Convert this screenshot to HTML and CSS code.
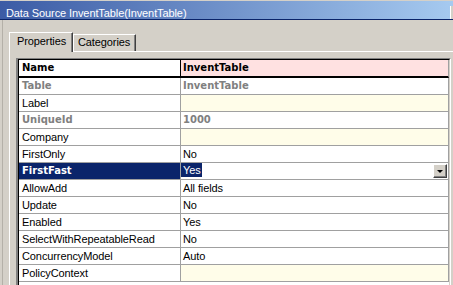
FILE: index.html
```html
<!DOCTYPE html>
<html>
<head>
<meta charset="utf-8">
<title>Data Source InventTable(InventTable)</title>
<link rel="stylesheet" href="styles.css">
</head>
<body>
<div class="window">
  <div class="titlebar">
    <span class="title">Data Source InventTable(InventTable)</span>
    <span class="ctrl"></span>
  </div>
  <div class="client">
    <div class="tabs">
      <div class="tab active">Properties</div>
      <div class="tab">Categories</div>
    </div>
    <div class="panel">
      <div class="grid-frame">
        <div class="grid">
          <div class="row head"><div class="k b">Name</div><div class="v b pink">InventTable</div></div>
          <div class="row"><div class="k b dim">Table</div><div class="v b dim">InventTable</div></div>
          <div class="row"><div class="k">Label</div><div class="v yellow"></div></div>
          <div class="row"><div class="k b dim">UniqueId</div><div class="v b dim">1000</div></div>
          <div class="row"><div class="k">Company</div><div class="v yellow"></div></div>
          <div class="row"><div class="k">FirstOnly</div><div class="v">No</div></div>
          <div class="row sel"><div class="k b">FirstFast</div><div class="v edit"><span class="hl">Yes</span><span class="dd"><span class="arrow"></span></span></div></div>
          <div class="row"><div class="k">AllowAdd</div><div class="v">All fields</div></div>
          <div class="row"><div class="k">Update</div><div class="v">No</div></div>
          <div class="row"><div class="k">Enabled</div><div class="v">Yes</div></div>
          <div class="row"><div class="k">SelectWithRepeatableRead</div><div class="v">No</div></div>
          <div class="row"><div class="k">ConcurrencyModel</div><div class="v">Auto</div></div>
          <div class="row"><div class="k">PolicyContext</div><div class="v yellow"></div></div>
        </div>
      </div>
    </div>
  </div>
</div>
</body>
</html>
```
FILE: styles.css
```css
html, body {
  margin: 0;
  padding: 0;
}
body {
  width: 453px;
  height: 285px;
  overflow: hidden;
  background: #d4d0c8;
  font-family: "Liberation Sans", Arial, sans-serif;
  font-size: 11px;
  letter-spacing: -0.1px;
  color: #000;
}
.window {
  border-top: 1px solid #d4d0c8;
}
.titlebar {
  box-sizing: border-box;
  border-bottom: 1px solid #0a246a;
  height: 19px;
  background: linear-gradient(to right, #3b5ba5, #a6caf0);
  display: flex;
  justify-content: space-between;
  align-items: flex-start;
}
.title {
  color: #fff;
  line-height: 13px;
  padding: 6px 0 0 6px;
  white-space: nowrap;
}
.ctrl {
  width: 2px;
  height: 13px;
  margin-top: 5px;
  background: #d4d0c8;
  border-left: 1px solid #fff;
}
.client {
  box-sizing: border-box;
  height: 265px;
  overflow: hidden;
  padding-top: 12px;
  margin-left: 2px;
  border-left: 1px solid #b4b0a8;
  display: flex;
  flex-direction: column;
}
.tabs {
  display: flex;
  align-items: flex-end;
  margin-left: 6px;
}
.tab {
  box-sizing: border-box;
  background: #d4d0c8;
  border-top: 1px solid #fff;
  border-left: 1px solid #fff;
  border-right: 1px solid #404040;
  box-shadow: inset -1px 0 0 #808080;
  line-height: 13px;
  white-space: nowrap;
  height: 17px;
  width: 63px;
  padding: 1px 0 0 4px;
}
.tab.active {
  position: relative;
  z-index: 1;
  height: 20px;
  width: 64px;
  margin-bottom: -1px;
  padding: 2px 0 0 7px;
}
.panel {
  flex: 1;
  display: flex;
  margin-left: 6px;
  border-top: 1px solid #fff;
  border-left: 1px solid #fff;
  padding: 6px 0 0 6px;
}
.grid-frame {
  width: 435px;
  box-sizing: border-box;
  border-top: 1px solid #808080;
  border-left: 2px solid #808080;
  border-right: 1px solid #fff;
  display: flex;
}
.grid {
  flex: 1;
  border-top: 1px solid #000;
  border-left: 1px solid #000;
  border-right: 1px solid #d4d0c8;
  background: #fff;
}
.row {
  display: grid;
  grid-template-columns: 162px 268px;
  height: 17px;
}
.k, .v {
  box-sizing: border-box;
  height: 17px;
  line-height: 16px;
  border-bottom: 1px solid #a0a0a0;
  border-right: 1px solid #a0a0a0;
  white-space: nowrap;
  overflow: hidden;
}
.k {
  padding-left: 3px;
}
.v {
  padding-left: 2px;
}
.b {
  font-family: "DejaVu Sans", Verdana, sans-serif;
  font-weight: bold;
  font-size: 10px;
  letter-spacing: 0;
}
.dim {
  color: #808080;
}
.pink {
  background: #ffe1e1;
}
.yellow {
  background: #fffde9;
}
.row.head {
  height: 18px;
}
.row.head .k, .row.head .v {
  height: 18px;
  border-bottom: 2px solid #000;
}
.row.head .k {
  border-right-color: #000;
}
.row.sel .k {
  background: #0a246a;
  color: #fff;
}
.v.edit {
  display: flex;
  justify-content: space-between;
  align-items: flex-start;
  padding-left: 0;
}
.hl {
  background: #0a246a;
  color: #fff;
  line-height: 14px;
  padding: 0 1px 0 2px;
}
.dd {
  box-sizing: border-box;
  width: 14px;
  height: 14px;
  margin: 1px 1px 0 0;
  background: #d4d0c8;
  border-top: 1px solid #fff;
  border-left: 1px solid #fff;
  border-right: 1px solid #404040;
  border-bottom: 1px solid #404040;
  box-shadow: inset -1px -1px 0 #808080;
  display: flex;
  align-items: center;
  justify-content: center;
}
.arrow {
  width: 0;
  height: 0;
  border-left: 3px solid transparent;
  border-right: 3px solid transparent;
  border-top: 3px solid #000;
  margin: 1px 1px 0 0;
}
```
